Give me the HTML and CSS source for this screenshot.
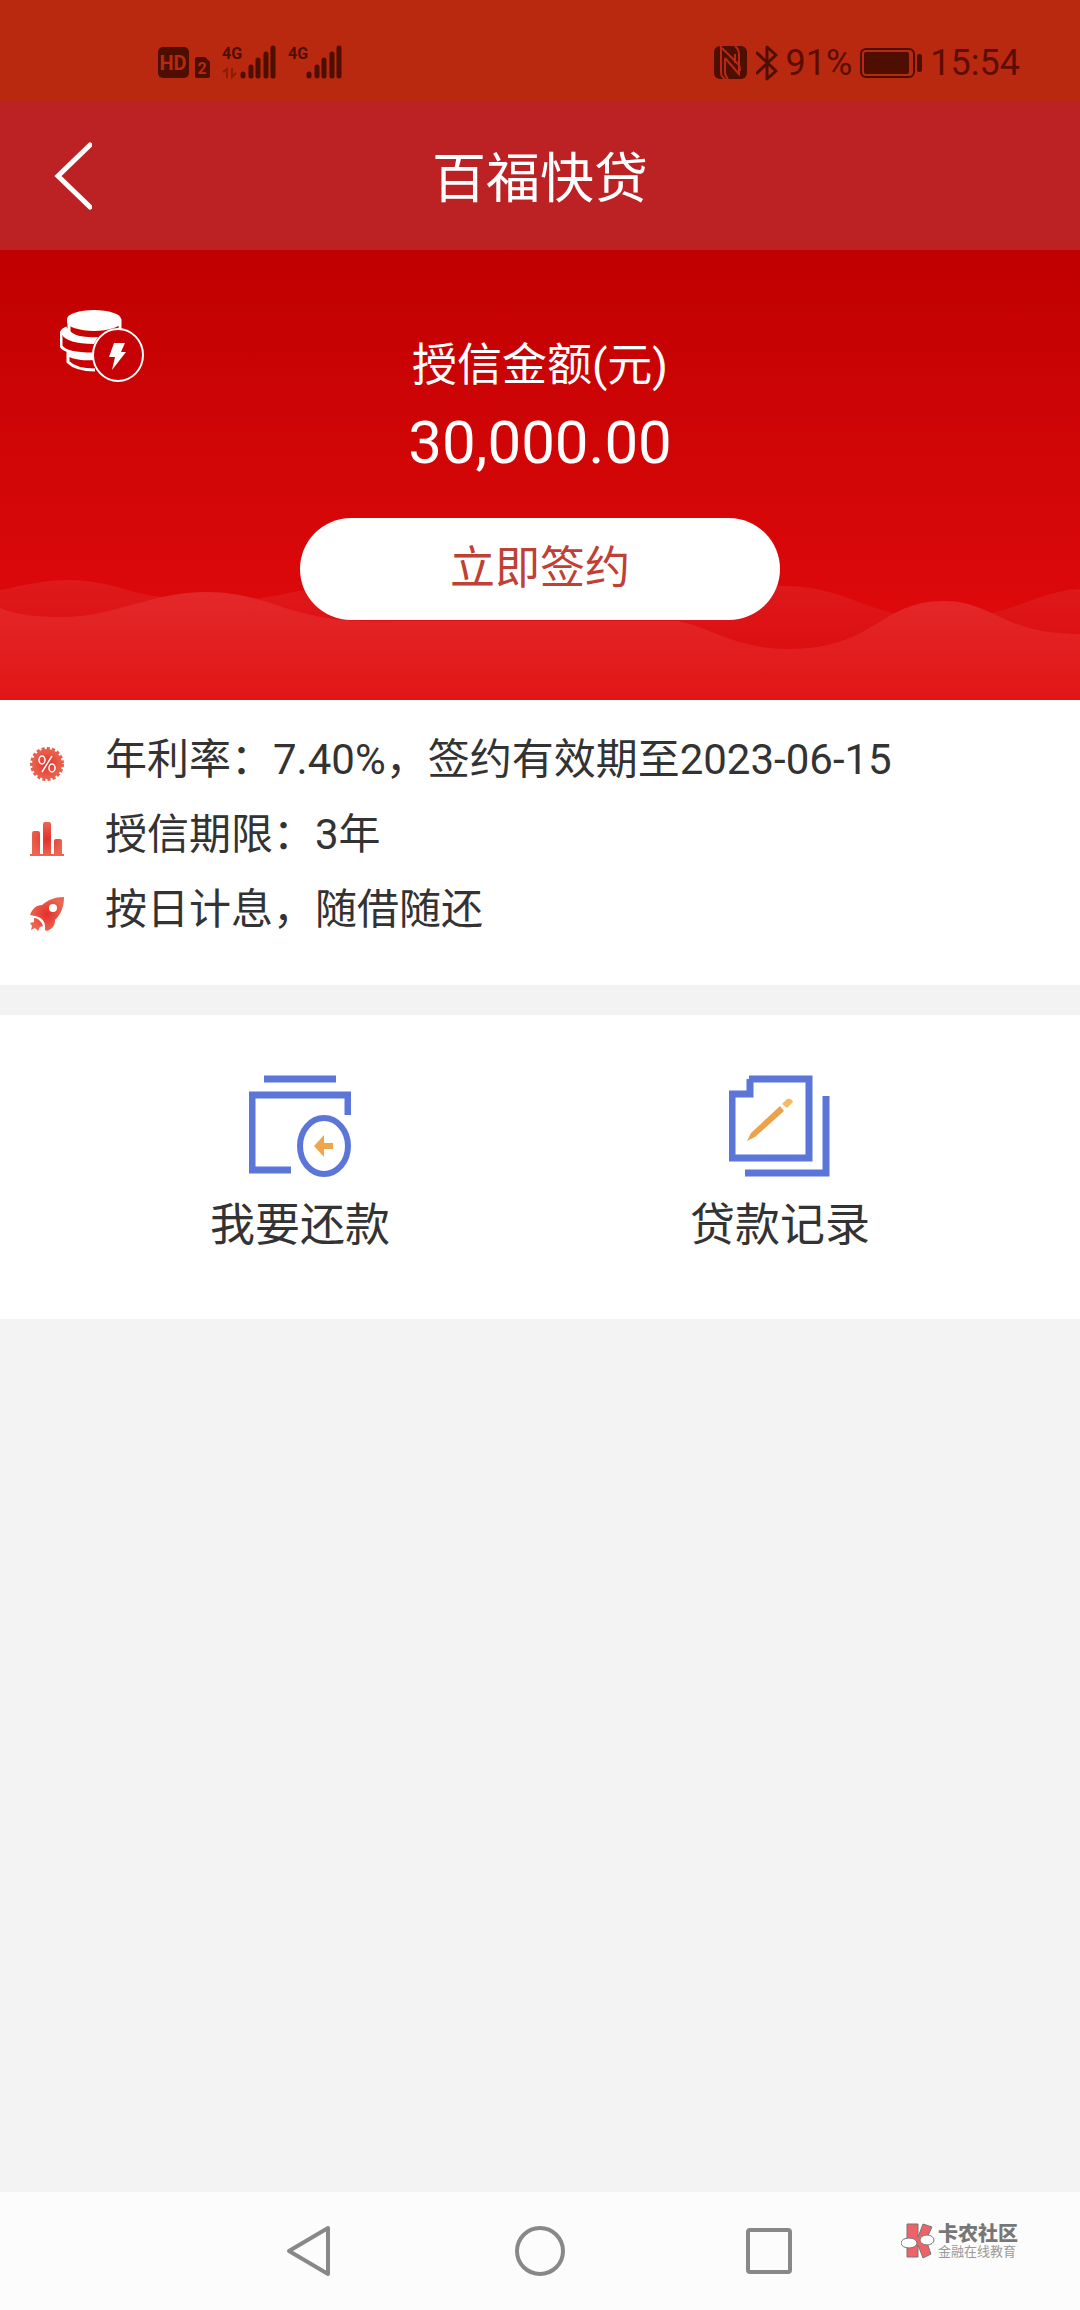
FILE: index.html
```html
<!DOCTYPE html>
<html lang="zh-CN">
<head>
<meta charset="utf-8">
<meta name="viewport" content="width=device-width, initial-scale=1">
<title>百福快贷</title>
<link rel="stylesheet" href="styles.css">
</head>
<body>
<div class="app">
  <div class="status">
    <div class="status-group">
      <svg width="52" height="36" viewBox="0 0 52 36" aria-hidden="true">
        <rect x="0" y="2" width="31" height="31" rx="5" fill="#4f0f00"/>
        <text x="15" y="25" class="hd-text">HD</text>
        <path d="M39 12h8l5 5v14a2 2 0 0 1-2 2H39a2 2 0 0 1-2-2V14a2 2 0 0 1 2-2z" fill="#4f0f00"/>
        <text x="44" y="29" class="sim-text">2</text>
      </svg>
      <svg width="54" height="36" viewBox="0 0 54 36" aria-hidden="true">
        <text x="0" y="14" class="net-text">4G</text>
        <path d="M1 27l4-3v9M10 23v9l4-4" fill="none" stroke="#8d1b08" stroke-width="2"/>
        <path d="M21 29v2M29 22v9M36 15v16M44 9v22M51 3v28" class="bars"/>
      </svg>
      <svg width="54" height="36" viewBox="0 0 54 36" aria-hidden="true">
        <text x="0" y="14" class="net-text">4G</text>
        <path d="M21 29v2M29 22v9M36 15v16M44 9v22M51 3v28" class="bars"/>
      </svg>
    </div>
    <div class="status-group status-right">
      <svg width="34" height="36" viewBox="0 0 34 36" aria-hidden="true">
        <rect x="0" y="1" width="33" height="33" rx="6" fill="#4f0f00"/>
        <path d="M7 1v26c0 4 2 6 4 7M8 3l16 16c2 2 2 4 2 7M11 13v14c0 4 1 5 3 7M11 13l14 16V8c0-4-2-5-4-7M21 9v9" fill="none" stroke="#b9290f" stroke-width="2"/>
      </svg>
      <svg width="22" height="36" viewBox="0 0 22 36" aria-hidden="true">
        <path d="M1 8l19 18-9 8V2l9 8L1 28" fill="none" stroke="#4f0f00" stroke-width="3" stroke-linejoin="round" stroke-linecap="round"/>
      </svg>
      <span class="status-text">91%</span>
      <svg width="62" height="30" viewBox="0 0 62 30" aria-hidden="true">
        <rect x="1" y="1" width="53" height="28" rx="5" fill="none" stroke="#4f0f00" stroke-width="2"/>
        <rect x="4" y="4" width="45" height="22" rx="2" fill="#4f0f00"/>
        <rect x="57" y="6" width="5" height="18" rx="2" fill="#4f0f00"/>
      </svg>
      <span class="status-text">15:54</span>
    </div>
  </div>

  <header class="header">
    <button class="back" type="button" aria-label="返回">
      <svg width="38" height="70" viewBox="0 0 38 70"><path d="M36 4L4 35l32 31" fill="none" stroke="#fff" stroke-width="5" stroke-linecap="round"/></svg>
    </button>
    <h1 class="title">百福快贷</h1>
  </header>

  <main class="main">
    <section class="hero">
      <svg class="waves" viewBox="0 0 1080 450" preserveAspectRatio="none" aria-hidden="true">
        <defs>
          <linearGradient id="back" gradientUnits="userSpaceOnUse" x1="0" y1="330" x2="0" y2="450"><stop offset="0" stop-color="#de1a1b"/><stop offset=".6" stop-color="#dc0e10"/></linearGradient>
          <linearGradient id="front" gradientUnits="userSpaceOnUse" x1="0" y1="345" x2="0" y2="450"><stop offset="0" stop-color="#e32829"/><stop offset="1" stop-color="#e21515"/></linearGradient>
        </defs>
        <path d="M0 340C25 335 45 330 69 330C110 330 130 345 165 347C195 348 225 352 262 348C300 342 340 330 400 332L770 336C830 334 850 352 892 363C930 372 960 370 992 363C1025 355 1050 340 1080 339V450H0Z" fill="url(#back)"/>
        <path d="M0 358C20 366 40 367 62 367C115 367 150 342 207 342C250 342 275 357 303 363C330 370 350 372 400 371H678C710 377 735 399 789 399C875 399 880 351 943 351C995 351 1000 384 1080 384V450H0Z" fill="url(#front)"/>
      </svg>
      <svg class="coins" width="86" height="74" viewBox="0 0 86 74" aria-hidden="true">
        <path d="M9 9v13M60 9v12" stroke="#fff" stroke-width="3"/>
        <path d="M7 9a27 9 0 0 1 54 0v3a27 9 0 0 1-54 0z" fill="#fff"/>
        <path d="M7 18C1 20 0 25 1 27v9c3 5 14 8 32 8M8 40v12c5 5 14 8 27 8" fill="none" stroke="#fff" stroke-width="3"/>
        <path d="M2 22l6-4c3 7 14 10 30 9l-4 7C16 34 5 30 2 25zM8 41c7 3 15 3 25 2v7C22 51 12 49 8 46z" fill="#fff"/>
        <ellipse cx="58" cy="45" rx="25" ry="26" fill="#c70206" stroke="#fff" stroke-width="2"/>
        <path d="M54 33h11l-4 9h5L52 60l3-13h-6z" fill="#fff"/>
      </svg>
      <div class="credit">
        <p class="credit-label">授信金额(元)</p>
        <p class="credit-amount">30,000.00</p>
        <button class="sign" type="button">立即签约</button>
      </div>
    </section>

    <ul class="info">
      <li class="info-row">
        <svg class="info-icon" width="34" height="34" viewBox="0 0 34 34" aria-hidden="true">
          <defs><radialGradient id="red"><stop offset="0" stop-color="#e42f2d"/><stop offset="1" stop-color="#ea6650"/></radialGradient></defs>
          <circle cx="17" cy="17" r="15" fill="url(#red)"/>
          <circle cx="17" cy="17" r="15" fill="none" stroke="#e95e4a" stroke-width="4" stroke-dasharray="3 2"/>
          <path d="M22 9L12 25" stroke="#fff" stroke-width="1.5"/>
          <ellipse cx="12" cy="13" rx="3" ry="4" fill="none" stroke="#fff" stroke-width="1.5"/>
          <ellipse cx="22" cy="21" rx="3" ry="4" fill="none" stroke="#fff" stroke-width="1.5"/>
        </svg>
        <span>年利率：7.40%，签约有效期至2023-06-15</span>
      </li>
      <li class="info-row">
        <svg class="info-icon" width="34" height="34" viewBox="0 0 34 34" aria-hidden="true">
          <path d="M2 32V11q0-2 2-2h4q2 0 2 2v21zM13 32V2q0-2 2-2h4q2 0 2 2v30zM24 32V19q0-2 2-2h4q2 0 2 2v13zM0 32h34v2H0z" fill="url(#red)"/>
        </svg>
        <span>授信期限：3年</span>
      </li>
      <li class="info-row">
        <svg class="info-icon" width="34" height="34" viewBox="0 0 34 34" aria-hidden="true">
          <path d="M34 0C24 0 18 3 12 8C6 8 2 12 0 18l5 1c6 1 10 5 10 10v4l2 1c5-2 8-5 8-11C31 17 34 10 34 0zM4 21c4 0 8 4 9 8l-3 1-2 4-3-3-4 2 1-4-2-3 4-1z" fill="url(#red)"/>
          <circle cx="23" cy="11" r="4" fill="#fff"/>
        </svg>
        <span>按日计息，随借随还</span>
      </li>
    </ul>

    <nav class="actions">
      <a class="action" href="#repay">
        <svg width="102" height="102" viewBox="0 0 102 102" aria-hidden="true">
          <path d="M15 4h72M42 95H3V20h96v20" fill="none" stroke="#5b76d8" stroke-width="7"/>
          <ellipse cx="75" cy="71" rx="24" ry="28" fill="none" stroke="#5b76d8" stroke-width="6"/>
          <path d="M65 71l10-11v8h9v6h-9v8z" fill="#f0a54a"/>
        </svg>
        <span>我要还款</span>
      </a>
      <a class="action" href="#records">
        <svg width="102" height="102" viewBox="0 0 102 102" aria-hidden="true">
          <path d="M20 4H80V83H3V19H21V4M97 21V98H16" fill="none" stroke="#5b76d8" stroke-width="7"/>
          <path d="M18 66l4-8 29-27 4 5-29 26z" fill="#eda24a"/>
          <path d="M53 29l5-5q4-1 6 3l-6 6z" fill="#f5b961"/>
        </svg>
        <span>贷款记录</span>
      </a>
    </nav>
  </main>

  <footer class="sysnav">
    <button type="button" class="key" aria-label="后退"><svg width="50" height="52" viewBox="0 0 50 52"><path d="M43 3v46L4 26z" class="key-line"/></svg></button>
    <button type="button" class="key" aria-label="主屏幕"><svg width="50" height="52" viewBox="0 0 50 52"><circle cx="25" cy="26" r="23" class="key-line"/></svg></button>
    <button type="button" class="key" aria-label="最近任务"><svg width="50" height="52" viewBox="0 0 50 52"><rect x="3" y="5" width="42" height="42" rx="2" class="key-line"/></svg></button>
    <div class="brand">
      <svg width="34" height="36" viewBox="0 0 34 36" aria-hidden="true">
        <path d="M6 1h11v13l5-13 9 3-6 13 5 14-8 4-5-13v12H6z" fill="#ee6268" stroke="#777" stroke-width="1"/>
        <ellipse cx="8" cy="20" rx="8" ry="5" fill="#fff" stroke="#777"/>
        <ellipse cx="26" cy="17" rx="7" ry="5" fill="#fff" stroke="#777"/>
      </svg>
      <div class="brand-text"><strong>卡农社区</strong><span>金融在线教育</span></div>
    </div>
  </footer>
</div>
</body>
</html>
```
FILE: styles.css
```css
* { box-sizing: border-box; }

body {
  margin: 0;
  background: #f3f3f3;
  color: #333;
  font-family: Roboto, "Noto Sans CJK SC", sans-serif;
}

p, h1, ul { margin: 0; padding: 0; font-weight: 400; }
button { border: 0; padding: 0; background: none; font: inherit; color: inherit; }
svg { display: block; flex: none; }

.app { min-height: 100vh; display: flex; flex-direction: column; }

.status {
  display: flex;
  justify-content: space-between;
  align-items: center;
  padding: 43px 60px 19px 158px;
  background: #b9290f;
  color: #5d0d00;
}
.status-group { display: flex; align-items: center; gap: 12px; height: 40px; }
.status-right { gap: 8px; }
.status-text { font-size: 36px; line-height: 40px; }
.hd-text { font: 700 20px Roboto, sans-serif; fill: #b9290f; text-anchor: middle; }
.sim-text { font: 700 16px Roboto, sans-serif; fill: #b9290f; text-anchor: middle; }
.net-text { font: 700 16px Roboto, sans-serif; fill: #4f0f00; }
.bars { fill: none; stroke: #4f0f00; stroke-width: 5; stroke-linecap: round; }

.header {
  display: grid;
  grid-template-columns: 1fr auto 1fr;
  align-items: center;
  padding: 30px 54px;
  background: #bc2123;
  color: #fff;
}
.back { justify-self: start; }
.title { padding-top: 8px; font-size: 54px; line-height: 80px; }

.main { flex: 1; }

.hero {
  position: relative;
  display: grid;
  grid-template-columns: 1fr 480px 1fr;
  padding: 60px 60px 80px;
  background: linear-gradient(#c00000, #dd090b 80%);
  color: #fff;
}
.waves { position: absolute; inset: 0; width: 100%; height: 100%; }
.coins, .credit { position: relative; }
.credit { padding-top: 26px; text-align: center; }
.credit-label { font-size: 45px; line-height: 60px; }
.credit-amount { margin: 12px 0 40px; font-size: 60px; line-height: 70px; }
.sign {
  display: block;
  width: 100%;
  border-radius: 51px;
  background: #fff;
  color: #bf4035;
  font-size: 45px;
  line-height: 102px;
}

.info {
  padding: 22px 30px 38px;
  background: #fff;
  list-style: none;
}
.info-row {
  display: flex;
  align-items: center;
  gap: 41px;
  font-size: 42px;
  line-height: 75px;
}
.info-icon { margin-top: 8px; }

.actions {
  display: grid;
  grid-template-columns: 1fr 1fr;
  margin-top: 30px;
  padding: 60px 60px 58px;
  background: #fff;
}
.action {
  display: flex;
  flex-direction: column;
  align-items: center;
  gap: 14px;
  color: inherit;
  font-size: 45px;
  line-height: 70px;
  text-decoration: none;
}

.sysnav {
  position: relative;
  display: flex;
  justify-content: center;
  gap: 180px;
  padding: 33px 0;
  background: #fcfcfc;
}
.key-line { fill: none; stroke: #888; stroke-width: 4; stroke-linejoin: round; }
.brand {
  position: absolute;
  top: 31px;
  right: 62px;
  display: flex;
  gap: 3px;
  color: #777;
}
.brand-text { display: flex; flex-direction: column; }
.brand-text strong { font-size: 20px; line-height: 22px; font-weight: 900; }
.brand-text span { font-size: 13px; line-height: 14px; color: #999; }
```
